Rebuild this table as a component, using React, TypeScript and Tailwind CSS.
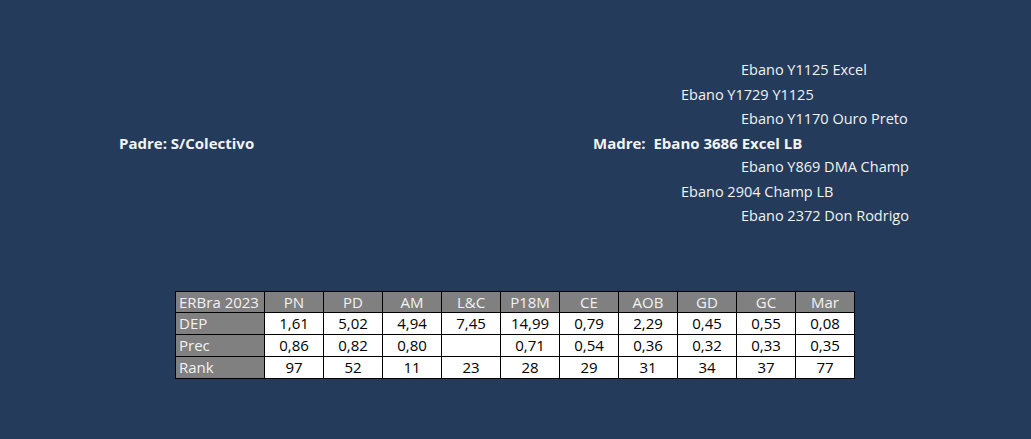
import React from 'react'

const cols = ['PN', 'PD', 'AM', 'L&C', 'P18M', 'CE', 'AOB', 'GD', 'GC', 'Mar']

const rows: { label: string; values: string[] }[] = [
  { label: 'DEP', values: ['1,61', '5,02', '4,94', '7,45', '14,99', '0,79', '2,29', '0,45', '0,55', '0,08'] },
  { label: 'Prec', values: ['0,86', '0,82', '0,80', '', '0,71', '0,54', '0,36', '0,32', '0,33', '0,35'] },
  { label: 'Rank', values: ['97', '52', '11', '23', '28', '29', '31', '34', '37', '77'] },
]

export default function App() {
  return (
    <div className="h-[439px] w-[1031px] bg-[#243b5b] text-[#f2f2f2] text-[14.5px] font-['Open_Sans',sans-serif] overflow-hidden">
      <div className="grid grid-cols-[474px_88px_60px_auto] grid-rows-[repeat(7,24.3px)] pl-[119px] pt-[58px] items-center whitespace-nowrap">
        <div className="col-start-4 row-start-1">Ebano Y1125 Excel</div>
        <div className="col-start-3 col-span-2 row-start-2">Ebano Y1729 Y1125</div>
        <div className="col-start-4 row-start-3">Ebano Y1170 Ouro Preto</div>
        <div className="col-start-1 row-start-4 text-[15px] font-bold">Padre: S/Colectivo</div>
        <div className="col-start-2 col-span-3 row-start-4 text-[15px] font-bold">Madre:&nbsp; Ebano 3686 Excel LB</div>
        <div className="col-start-4 row-start-5">Ebano Y869 DMA Champ</div>
        <div className="col-start-3 col-span-2 row-start-6">Ebano 2904 Champ LB</div>
        <div className="col-start-4 row-start-7">Ebano 2372 Don Rodrigo</div>
      </div>

      <div className="pl-[175px] pt-[63px]">
        <table className="border-collapse text-[15px] leading-none">
          <thead>
            <tr className="h-[21px] bg-[#808080] text-[#f2f2f2]">
              <th className="w-[89px] border border-black px-[3px] text-left font-normal">ERBra 2023</th>
              {cols.map(c => (
                <th key={c} className="w-[59px] border border-black text-center font-normal">{c}</th>
              ))}
            </tr>
          </thead>
          <tbody>
            {rows.map(r => (
              <tr key={r.label} className="h-[22px]">
                <td className="border border-black bg-[#808080] px-[3px] text-left text-[#f2f2f2]">{r.label}</td>
                {r.values.map((v, i) => (
                  <td key={i} className="border border-black bg-white text-center text-black">{v}</td>
                ))}
              </tr>
            ))}
          </tbody>
        </table>
      </div>
    </div>
  )
}
